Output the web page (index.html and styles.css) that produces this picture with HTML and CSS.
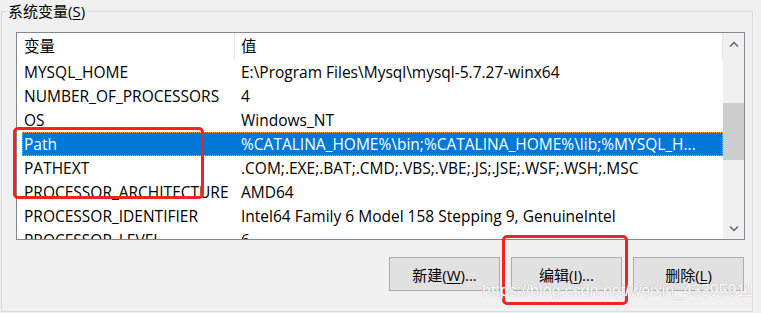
FILE: index.html
```html
<!DOCTYPE html>
<html lang="zh-CN">
<head>
    <meta charset="UTF-8">
    <meta name="viewport" content="width=device-width, initial-scale=1.0">
    <title>系统变量</title>
    <link rel="stylesheet" href="styles.css">
</head>
<body>
    <div class="group">
        <div class="group-title">系统变量(<u>S</u>)</div>

        <div class="listbox">
            <div class="list-main">
                <div class="list-head">
                    <div class="head-name">变量</div>
                    <div class="head-value">值</div>
                </div>
                <div class="list-rows">
                    <div class="row"><span class="name">MYSQL_HOME</span><span class="value">E:\Program Files\Mysql\mysql-5.7.27-winx64</span></div>
                    <div class="row"><span class="name">NUMBER_OF_PROCESSORS</span><span class="value">4</span></div>
                    <div class="row"><span class="name">OS</span><span class="value">Windows_NT</span></div>
                    <div class="row selected"><span class="name">Path</span><span class="value">%CATALINA_HOME%\bin;%CATALINA_HOME%\lib;%MYSQL_H...</span></div>
                    <div class="row"><span class="name">PATHEXT</span><span class="value">.COM;.EXE;.BAT;.CMD;.VBS;.VBE;.JS;.JSE;.WSF;.WSH;.MSC</span></div>
                    <div class="row"><span class="name">PROCESSOR_ARCHITECTURE</span><span class="value">AMD64</span></div>
                    <div class="row"><span class="name">PROCESSOR_IDENTIFIER</span><span class="value">Intel64 Family 6 Model 158 Stepping 9, GenuineIntel</span></div>
                    <div class="row"><span class="name">PROCESSOR_LEVEL</span><span class="value">6</span></div>
                </div>
            </div>
            <div class="scrollbar">
                <div class="sb-btn">
                    <svg width="10" height="6" viewBox="0 0 10 6"><path d="M1 5.5 L5 1.5 L9 5.5" fill="none" stroke="#606060" stroke-width="1.4"/></svg>
                </div>
                <div class="sb-track"><div class="sb-thumb"></div></div>
                <div class="sb-btn">
                    <svg width="10" height="6" viewBox="0 0 10 6"><path d="M1 0.5 L5 4.5 L9 0.5" fill="none" stroke="#606060" stroke-width="1.4"/></svg>
                </div>
            </div>
        </div>

        <div class="buttons">
            <button class="win-button">新建(<u>W</u>)...</button>
            <button class="win-button">编辑(<u>I</u>)...</button>
            <button class="win-button">删除(<u>L</u>)</button>
        </div>
    </div>

    <!-- red annotation boxes drawn over the dialog -->
    <div class="mark mark-path"></div>
    <div class="mark mark-edit"></div>
    <div class="watermark">https://blog.csdn.net/weixin_43395911</div>
</body>
</html>
```

FILE: styles.css
```css
* {
    box-sizing: border-box;
}
body {
    margin: 0;
    width: 761px;
    height: 313px;
    overflow: hidden;
    position: relative;
    background-color: #f0f0f0;
    font-family: "Open Sans", "Noto Sans CJK SC", sans-serif;
    font-size: 15px;
    color: #000;
}
.group {
    margin: 11px 8px 0 1px;
    height: 301px;
    border: 1px solid #dcdcdc;
}
.group-title {
    width: fit-content;
    margin: -11px 0 0 5px;
    padding: 0 2px 0 1px;
    line-height: 20px;
    background-color: #f0f0f0;
}
.group-title u, .win-button u {
    text-underline-offset: 2px;
}
.listbox {
    display: flex;
    margin: 11px 0 0 14px;
    width: 729px;
    height: 208px;
    border: 1px solid #828790;
    background: #fff;
    font-size: 15.5px;
}
.list-main {
    flex: 1;
    overflow: hidden;
}
.list-head {
    display: grid;
    grid-template-columns: 218px 1fr;
    height: 27px;
    line-height: 27px;
}
.head-name {
    padding-left: 7px;
    border-right: 1px solid #e5e5e5;
}
.head-value {
    padding-left: 6px;
    border-right: 1px solid #e5e5e5;
}
.list-rows {
    height: 179px;
    overflow: hidden;
}
.row {
    display: grid;
    grid-template-columns: 218px 1fr;
    height: 24px;
    line-height: 24px;
    white-space: nowrap;
}
.row .name {
    padding-left: 7px;
    overflow: hidden;
}
.row .value {
    padding-left: 6px;
    overflow: hidden;
}
.row.selected {
    margin-left: 5px;
    grid-template-columns: 213px 1fr;
    background-color: #0078d7;
    color: #fff;
    outline: 1px dotted #f0a040;
    outline-offset: -1px;
}
.row.selected .name {
    padding-left: 2px;
}
.scrollbar {
    width: 21px;
    display: flex;
    flex-direction: column;
    background-color: #f0f0f0;
}
.sb-btn {
    height: 21px;
    display: flex;
    align-items: center;
    justify-content: center;
}
.sb-track {
    flex: 1;
}
.sb-thumb {
    margin-top: 49px;
    height: 57px;
    background-color: #cdcdcd;
}
.buttons {
    display: flex;
    justify-content: flex-end;
    gap: 11px;
    margin-top: 17px;
    padding-right: 8px;
}
.win-button {
    width: 111px;
    height: 34px;
    padding: 0;
    border: 1px solid #adadad;
    background-color: #e1e1e1;
    font-family: inherit;
    font-size: 15px;
    color: #000;
}
.mark {
    position: absolute;
    border: 3px solid #f42323;
    border-radius: 5px;
}
.mark-path {
    left: 13px;
    top: 127px;
    width: 191px;
    height: 72px;
}
.mark-edit {
    left: 502px;
    top: 235px;
    width: 126px;
    height: 70px;
}
.watermark {
    position: absolute;
    left: 482px;
    top: 282px;
    font-family: "Liberation Sans", Arial, sans-serif;
    font-size: 16px;
    color: #fbfbfb;
    text-shadow: 0 0 1px #b0b0b0, 0 0 1px #c0c0c0;
}
```
